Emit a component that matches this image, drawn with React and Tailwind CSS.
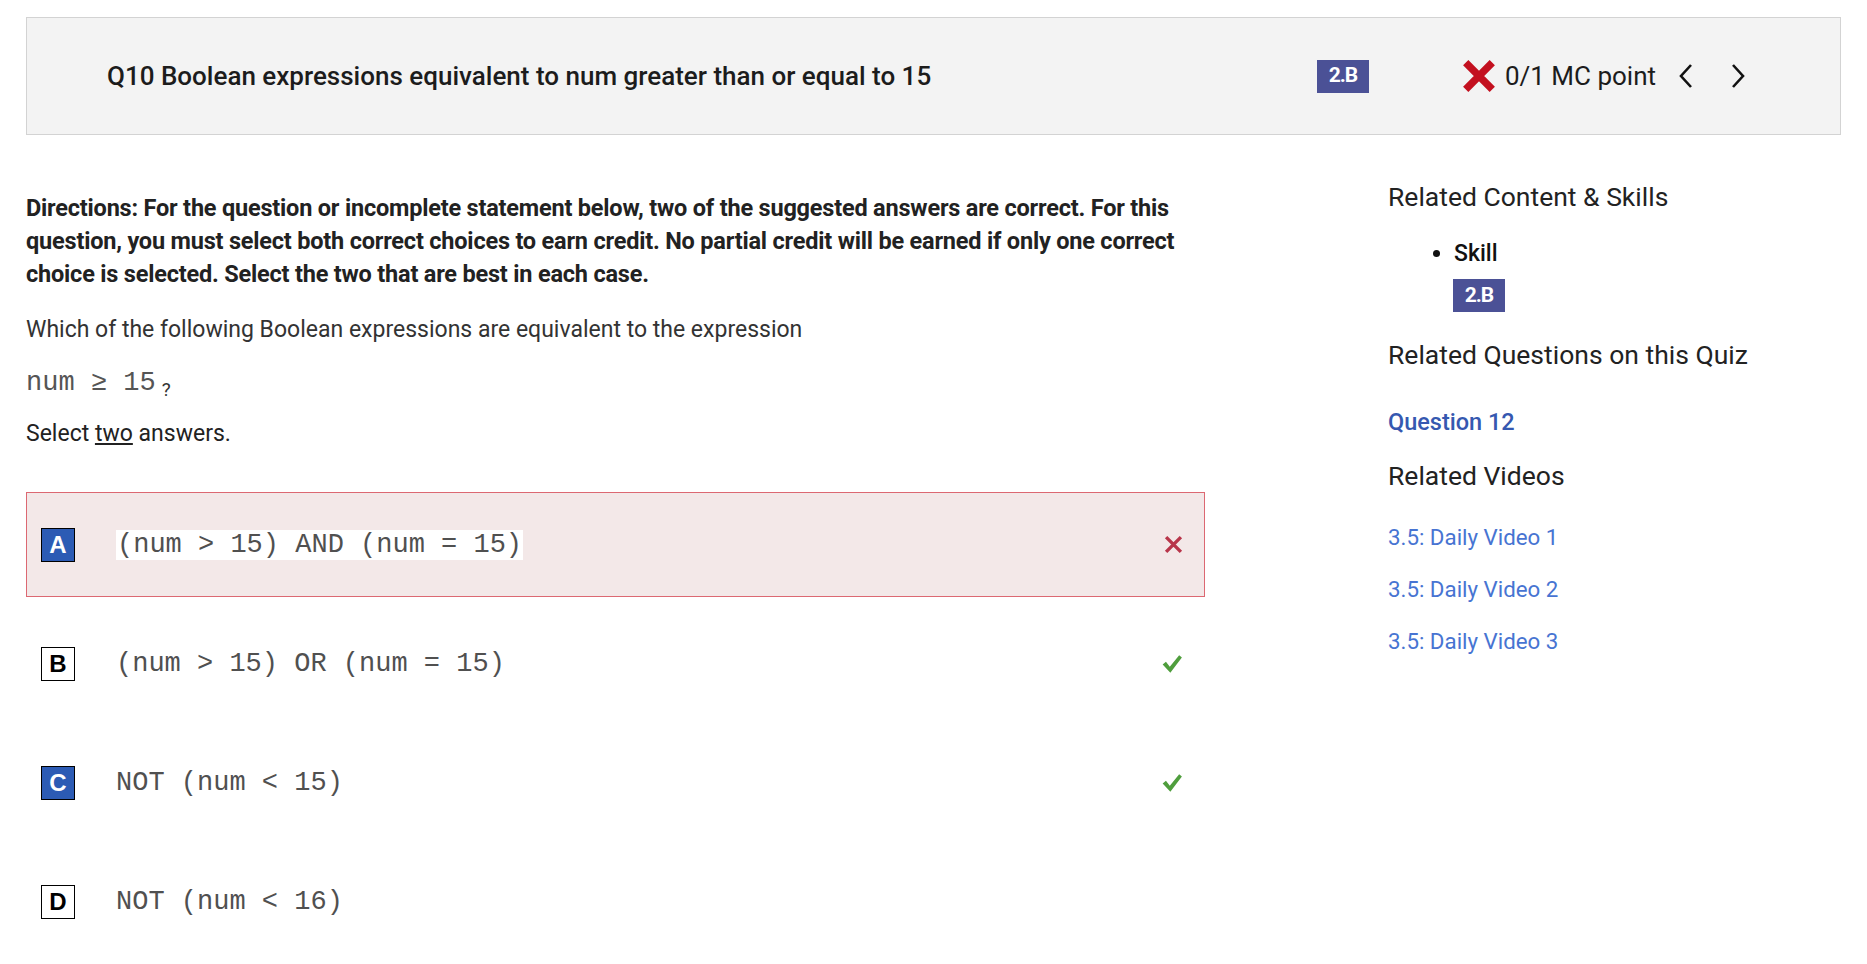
import React from "react";

const roboto = { fontFamily: "Roboto, 'Liberation Sans', sans-serif" };
const mono = { fontFamily: "'Liberation Mono', 'Courier New', monospace" };

function HeavyX({ className }) {
  return (
    <svg viewBox="0 0 32 32" className={className}>
      <path d="M3.5 3.5 L28.5 28.5 M28.5 3.5 L3.5 28.5" stroke="#c3101f" strokeWidth="7" strokeLinecap="butt" />
    </svg>
  );
}

function Chevron({ dir }) {
  return (
    <svg viewBox="0 0 16 26" className="w-[16px] h-[26px]">
      <polyline
        points={dir === "left" ? "13,2 3,13 13,24" : "3,2 13,13 3,24"}
        fill="none"
        stroke="#111"
        strokeWidth="2.6"
      />
    </svg>
  );
}

function WrongMark() {
  return (
    <svg viewBox="0 0 18 18" className="w-[19px] h-[19px]">
      <path d="M2 2 L16 16 M16 2 L2 16" stroke="#b8354a" strokeWidth="3.2" />
    </svg>
  );
}

function RightMark() {
  return (
    <svg viewBox="0 0 20 18" className="w-[22px] h-[20px]">
      <path d="M1.5 9.5 L4.5 7 L8 11.5 L16.5 1 L19 3 L8.5 17 Z" fill="#4f9e3d" />
    </svg>
  );
}

function Badge({ children, className = "" }) {
  return (
    <span
      className={`inline-flex items-center justify-center w-[52px] h-[33px] bg-[#4b5196] text-white font-bold text-[21px] tracking-tighter ${className}`}
      style={roboto}
    >
      {children}
    </span>
  );
}

const options = [
  { letter: "A", code: "(num > 15) AND (num = 15)", selected: true, wrong: true },
  { letter: "B", code: "(num > 15) OR (num = 15)", selected: false, correct: true },
  { letter: "C", code: "NOT (num < 15)", selected: true, correct: true },
  { letter: "D", code: "NOT (num < 16)", selected: false },
];

function Option({ opt }) {
  return (
    <div
      className={`h-[105px] flex items-center pl-[14px] pr-[21px] border ${
        opt.wrong ? "bg-[#f3e8e8] border-[#dc6872]" : "border-transparent"
      }`}
    >
      <span
        className={`w-[34px] h-[34px] flex items-center justify-center border border-black text-[24px] font-bold ${
          opt.selected ? "bg-[#2c5bb4] text-white" : "bg-white text-black"
        }`}
        style={{ fontFamily: "'Liberation Sans', Arial, sans-serif" }}
      >
        {opt.letter}
      </span>
      <span
        className={`ml-[41px] text-[27px] leading-[30px] text-[#505050] whitespace-pre ${opt.wrong ? "bg-white px-[1px]" : ""}`}
        style={mono}
      >
        {opt.code}
      </span>
      <span className="ml-auto flex items-center">
        {opt.wrong && <WrongMark />}
        {opt.correct && <RightMark />}
      </span>
    </div>
  );
}

export default function App() {
  return (
    <div className="min-h-screen bg-white px-[26px] pt-[17px] text-[#222]" style={roboto}>
      <header className="h-[118px] bg-[#f3f3f3] border border-[#d3d3d3] flex items-center pl-[80px] pr-[94px]">
        <h1 className="text-[26px] font-medium text-[#1c1c1c]">
          Q10 Boolean expressions equivalent to num greater than or equal to 15
        </h1>
        <Badge className="ml-auto">2.B</Badge>
        <div className="ml-[93px] flex items-center">
          <HeavyX className="w-[34px] h-[34px]" />
          <span className="ml-[9px] text-[26px] text-[#1c1c1c]">0/1 MC point</span>
          <span className="ml-[22px] flex items-center">
            <Chevron dir="left" />
          </span>
          <span className="ml-[36px] flex items-center">
            <Chevron dir="right" />
          </span>
        </div>
      </header>

      <div className="flex">
        <main className="w-[1179px]">
          <p className="mt-[57px] text-[23.5px] leading-[33px] font-bold text-[#222] tracking-[-0.2px]">
            Directions: For the question or incomplete statement below, two of the suggested answers are correct. For this
            question, you must select both correct choices to earn credit. No partial credit will be earned if only one correct
            choice is selected. Select the two that are best in each case.
          </p>
          <p className="mt-[24px] text-[23px] leading-[30px] text-[#333]">
            Which of the following Boolean expressions are equivalent to the expression
          </p>
          <p className="mt-[23px] text-[23px] leading-[30px] text-[#333]">
            <span className="text-[27px] text-[#555]" style={mono}>
              num ≥ 15
            </span>
            <span className="relative top-[6px] ml-[6px] text-[19px]">?</span>
          </p>
          <p className="mt-[20px] text-[23px] leading-[30px] text-[#222]">
            Select <span className="underline underline-offset-2">two</span> answers.
          </p>

          <div className="mt-[43px] flex flex-col gap-[14px]">
            {options.map((o) => (
              <Option key={o.letter} opt={o} />
            ))}
          </div>
        </main>

        <aside className="ml-[183px] flex-1">
          <h2 className="mt-[47px] text-[26.5px] leading-[30px] text-[#222]">Related Content &amp; Skills</h2>
          <ul className="mt-[27px] pl-[66px] list-disc">
            <li className="text-[23px] leading-[30px] font-medium text-[#111]">Skill</li>
          </ul>
          <div className="pl-[65px] mt-[10px]">
            <Badge>2.B</Badge>
          </div>
          <h2 className="mt-[28px] text-[26.5px] leading-[30px] text-[#222]">Related Questions on this Quiz</h2>
          <a className="block mt-[37px] text-[23.5px] leading-[30px] font-medium text-[#3558b0]">Question 12</a>
          <h2 className="mt-[24px] text-[26.5px] leading-[30px] text-[#222]">Related Videos</h2>
          <div className="mt-[31px] flex flex-col gap-[22px]">
            <a className="text-[22.3px] leading-[30px] text-[#4774d2]">3.5: Daily Video 1</a>
            <a className="text-[22.3px] leading-[30px] text-[#4774d2]">3.5: Daily Video 2</a>
            <a className="text-[22.3px] leading-[30px] text-[#4774d2]">3.5: Daily Video 3</a>
          </div>
        </aside>
      </div>
    </div>
  );
}
